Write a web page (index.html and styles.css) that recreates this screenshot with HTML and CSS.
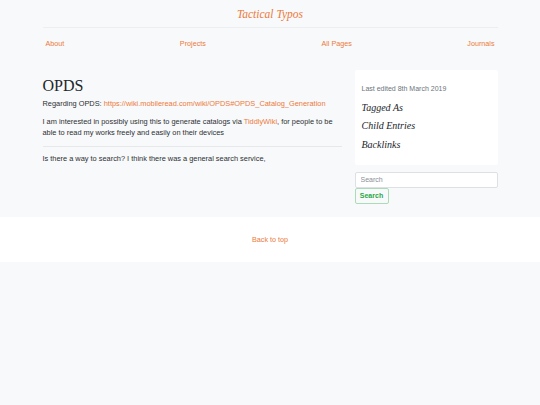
FILE: index.html
```html
<!DOCTYPE html>
<html lang="en">
<head>
<meta charset="utf-8">
<title>OPDS - Tactical Typos</title>
<link rel="stylesheet" href="styles.css">
</head>
<body>
<div class="container">
  <header class="masthead">
    <a class="brand" href="#">Tactical Typos</a>
  </header>
  <nav class="nav">
    <a href="#">About</a>
    <a href="#">Projects</a>
    <a href="#">All Pages</a>
    <a href="#">Journals</a>
  </nav>
  <div class="row">
    <main class="post">
      <h1 class="post-title">OPDS</h1>
      <p>Regarding OPDS: <a href="#">https://wiki.mobileread.com/wiki/OPDS#OPDS_Catalog_Generation</a></p>
      <p>I am interested in possibly using this to generate catalogs via <a href="#">TiddlyWiki</a>, for people to be able to read my works freely and easily on their devices</p>
      <hr class="sep">
      <p>Is there a way to search? I think there was a general search service,</p>
    </main>
    <aside class="sidebar">
      <div class="side-box">
        <p class="edited">Last edited 8th March 2019</p>
        <h4 class="side-head">Tagged As</h4>
        <h4 class="side-head">Child Entries</h4>
        <h4 class="side-head">Backlinks</h4>
      </div>
      <form class="search">
        <input class="search-input" type="text" placeholder="Search">
        <button class="search-btn" type="button">Search</button>
      </form>
    </aside>
  </div>
</div>
<footer class="footer">
  <a href="#">Back to top</a>
</footer>
</body>
</html>
```

FILE: styles.css
```css
html, body {
  margin: 0;
  padding: 0;
  background: #f8f9fa;
}
body {
  font-family: "Liberation Sans", Arial, sans-serif;
  font-size: 7.4px;
  line-height: 1.5;
  color: #2b2f33;
}
a {
  color: #ec7a3c;
  text-decoration: none;
}
.container {
  width: 455px;
  margin: 0 auto;
}
.masthead {
  text-align: center;
  padding: 7px 0 5px;
  border-bottom: 1px solid #eceef0;
}
.brand {
  display: block;
  line-height: 15px;
  font-family: "Liberation Serif", "Times New Roman", serif;
  font-style: italic;
  font-size: 11.5px;
}
.nav {
  display: flex;
  justify-content: space-between;
  padding: 0 3px;
  margin-top: 10px;
  line-height: 11px;
  font-size: 7.2px;
}
.row {
  display: grid;
  grid-template-columns: 299px 143px;
  justify-content: space-between;
  margin-top: 21px;
}
.post-title {
  font-family: "Liberation Serif", "Times New Roman", serif;
  font-weight: normal;
  font-size: 16px;
  line-height: 1.2;
  margin: 6px 0 2.5px;
  color: #212529;
}
.post p {
  margin: 0 0 7.5px;
}
.sep {
  border: 0;
  border-top: 1px solid #e6e8ea;
  margin: 0 0 6px;
}
.side-box {
  background: #fff;
  border-radius: 2px;
  padding: 14px 7px 14px;
}
.edited {
  margin: 0 0 6px;
  color: #6c757d;
  font-size: 7px;
}
.side-head {
  font-family: "Liberation Serif", "Times New Roman", serif;
  font-style: italic;
  font-weight: normal;
  font-size: 10px;
  line-height: 13px;
  margin: 0 0 5.5px;
  color: #212529;
}
.side-head:last-child {
  margin-bottom: 0;
}
.search {
  margin: 7px 0 0;
  display: flex;
  flex-direction: column;
  align-items: flex-start;
}
.search-input {
  box-sizing: border-box;
  width: 100%;
  height: 16px;
  margin: 0;
  border: 1px solid #dde1e5;
  border-radius: 2px;
  padding: 0 5px;
  font-family: "Liberation Sans", Arial, sans-serif;
  font-size: 7px;
  color: #495057;
  background: #fff;
}
.search-input::placeholder {
  color: #8a9096;
}
.search-btn {
  box-sizing: border-box;
  height: 16px;
  width: 34px;
  margin: 0;
  padding: 0;
  border: 1px solid #a9dcb7;
  border-radius: 2px;
  background: transparent;
  color: #28a745;
  font-family: "Liberation Sans", Arial, sans-serif;
  font-size: 7px;
  font-weight: bold;
}
.footer {
  margin-top: 13px;
  background: #fff;
  height: 45px;
  display: flex;
  align-items: center;
  justify-content: center;
  line-height: 11px;
  font-size: 7.2px;
}
```
